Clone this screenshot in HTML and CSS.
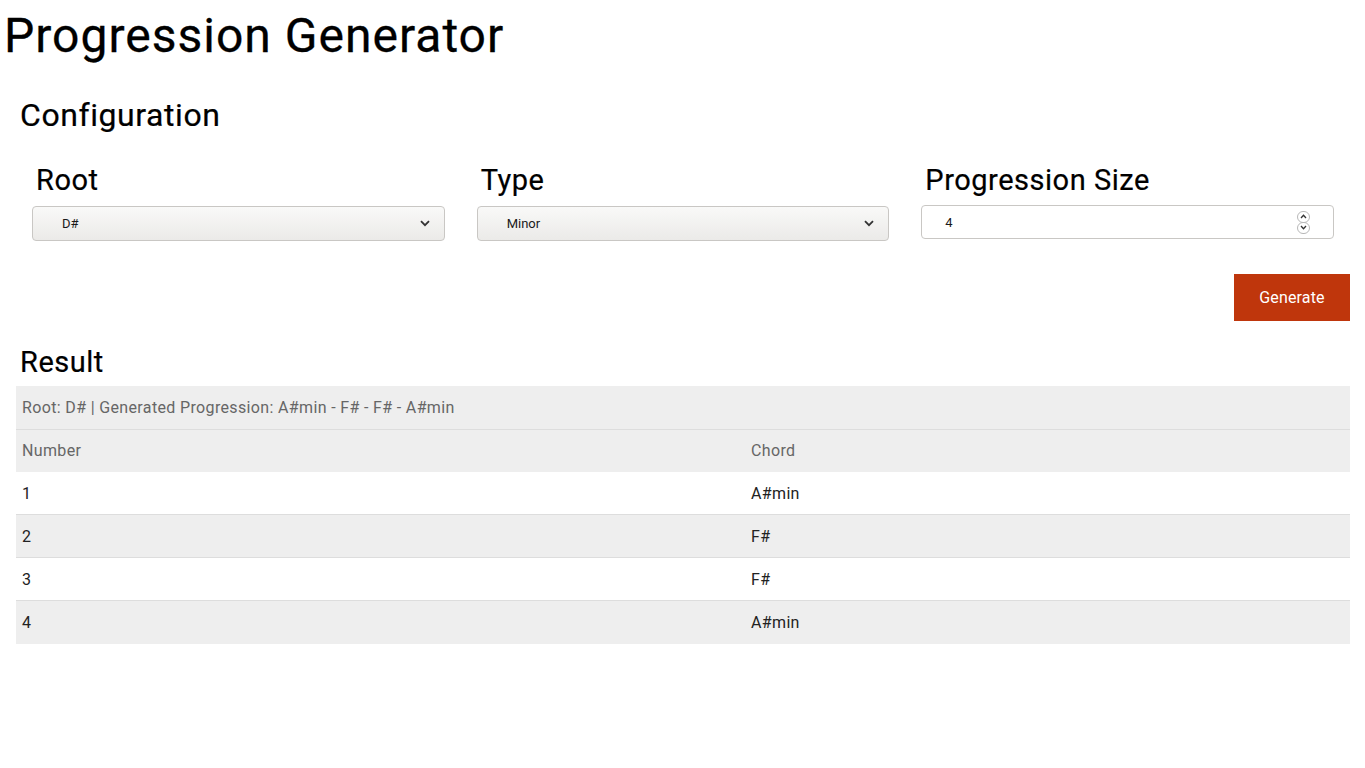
FILE: index.html
```html
<!DOCTYPE html>
<html>
<head>
<meta charset="utf-8">
<title>Progression Generator</title>
<link rel="stylesheet" href="styles.css">
</head>
<body>
<h1 class="title">Progression Generator</h1>
<main class="page">
  <h2 class="section-title">Configuration</h2>
  <div class="fields">
    <div class="field">
      <label class="field-label">Root</label>
      <div class="select">
        <span class="select-value">D#</span>
        <svg class="chevron" width="10" height="7" viewBox="0 0 10 7"><path d="M1 1.2 L5 5.2 L9 1.2" fill="none" stroke="#333" stroke-width="1.8"/></svg>
      </div>
    </div>
    <div class="field">
      <label class="field-label">Type</label>
      <div class="select">
        <span class="select-value">Minor</span>
        <svg class="chevron" width="10" height="7" viewBox="0 0 10 7"><path d="M1 1.2 L5 5.2 L9 1.2" fill="none" stroke="#333" stroke-width="1.8"/></svg>
      </div>
    </div>
    <div class="field">
      <label class="field-label">Progression Size</label>
      <div class="number">
        <span class="number-value">4</span>
        <span class="spin">
          <span class="spin-btn"><svg width="7" height="5" viewBox="0 0 7 5"><path d="M1 4 L3.5 1.3 L6 4" fill="none" stroke="#333" stroke-width="1.3"/></svg></span>
          <span class="spin-btn"><svg width="7" height="5" viewBox="0 0 7 5"><path d="M1 1 L3.5 3.7 L6 1" fill="none" stroke="#333" stroke-width="1.3"/></svg></span>
        </span>
      </div>
    </div>
  </div>
  <div class="actions">
    <button class="btn">Generate</button>
  </div>
  <h3 class="result-title">Result</h3>
  <table class="result">
    <caption class="result-caption">Root: D# | Generated Progression: A#min - F# - F# - A#min</caption>
    <thead>
      <tr class="head-row"><th class="col-num">Number</th><th class="col-chord">Chord</th></tr>
    </thead>
    <tbody>
      <tr><td>1</td><td>A#min</td></tr>
      <tr class="alt"><td>2</td><td>F#</td></tr>
      <tr><td>3</td><td>F#</td></tr>
      <tr class="alt"><td>4</td><td>A#min</td></tr>
    </tbody>
  </table>
</main>
</body>
</html>
```

FILE: styles.css
```css
* { box-sizing: border-box; }
body {
  margin: 0;
  font-family: Roboto, "Liberation Sans", sans-serif;
  color: #000;
  background: #fff;
  letter-spacing: 0.02em;
}
.title {
  margin: 8px 0 0 4px;
  font-size: 48px;
  line-height: 56px;
  font-weight: 400;
  letter-spacing: 0.021em;
  -webkit-text-stroke: 0.3px #000;
}
.page {
  padding: 0 15px 0 16px;
}
.section-title {
  margin: 32px 0 0 4px;
  font-size: 32px;
  line-height: 38px;
  font-weight: 400;
  letter-spacing: 0.018em;
  -webkit-text-stroke: 0.2px #000;
}
.fields {
  margin-top: 29px;
  padding: 0 16px;
  display: grid;
  grid-template-columns: repeat(3, 1fr);
  column-gap: 32px;
}
.field {
  display: flex;
  flex-direction: column;
}
.field-label {
  font-size: 29px;
  line-height: 34px;
  font-weight: 400;
  letter-spacing: 0.018em;
  -webkit-text-stroke: 0.2px #000;
  padding-left: 4px;
  margin-bottom: 9px;
}
.select {
  height: 35px;
  border: 1px solid #c9c7c4;
  border-radius: 4px;
  background: linear-gradient(#f9f9f8, #ebeae8);
  display: flex;
  align-items: center;
  justify-content: space-between;
  padding: 0 14px 0 29px;
  font-size: 13px;
  letter-spacing: 0;
  color: #1a1a1a;
}
.chevron { display: block; }
.number {
  height: 34px;
  margin-top: -1px;
  border: 1px solid #c9c7c4;
  border-radius: 4px;
  background: #fff;
  display: flex;
  align-items: center;
  justify-content: space-between;
  padding: 0 23px 0 23px;
  font-size: 13px;
  letter-spacing: 0;
  color: #1a1a1a;
}
.spin {
  display: flex;
  flex-direction: column;
}
.spin-btn {
  width: 13px;
  height: 12px;
  border: 1px solid #b8b8b8;
  border-radius: 6px;
  display: flex;
  align-items: center;
  justify-content: center;
  background: #fff;
}
.spin-btn + .spin-btn { margin-top: -1px; }
.actions {
  margin-top: 33px;
  display: flex;
  justify-content: flex-end;
}
.btn {
  height: 47px;
  width: 116px;
  border: 0;
  border-radius: 0;
  background: #bf360c;
  color: #fff;
  font-family: Roboto, "Liberation Sans", sans-serif;
  font-size: 16px;
  letter-spacing: 0.01em;
}
.result-title {
  margin: 24px 0 0 4px;
  font-size: 29px;
  line-height: 35px;
  font-weight: 400;
  letter-spacing: 0.018em;
  -webkit-text-stroke: 0.2px #000;
}
.result {
  margin-top: 6px;
  width: 100%;
  border-collapse: collapse;
  font-size: 16px;
  line-height: 19px;
  letter-spacing: 0.022em;
}
.result-caption {
  caption-side: top;
  text-align: left;
  background: #eee;
  color: #666;
  padding: 12px 6px 12px 6px;
  border-bottom: 1px solid #ddd;
}
.result th, .result td {
  text-align: left;
  font-weight: 400;
  padding: 12px 6px 11px 6px;
  border-bottom: 1px solid #ddd;
}
.head-row { background: #eee; color: #666; }
.head-row th { border-bottom: 0; padding: 11px 6px 12px 6px; }
.result tbody tr:last-child td { border-bottom-color: #eee; }
.col-num { width: 729px; }
.result td { color: #222; }
.alt { background: #eee; }
```
